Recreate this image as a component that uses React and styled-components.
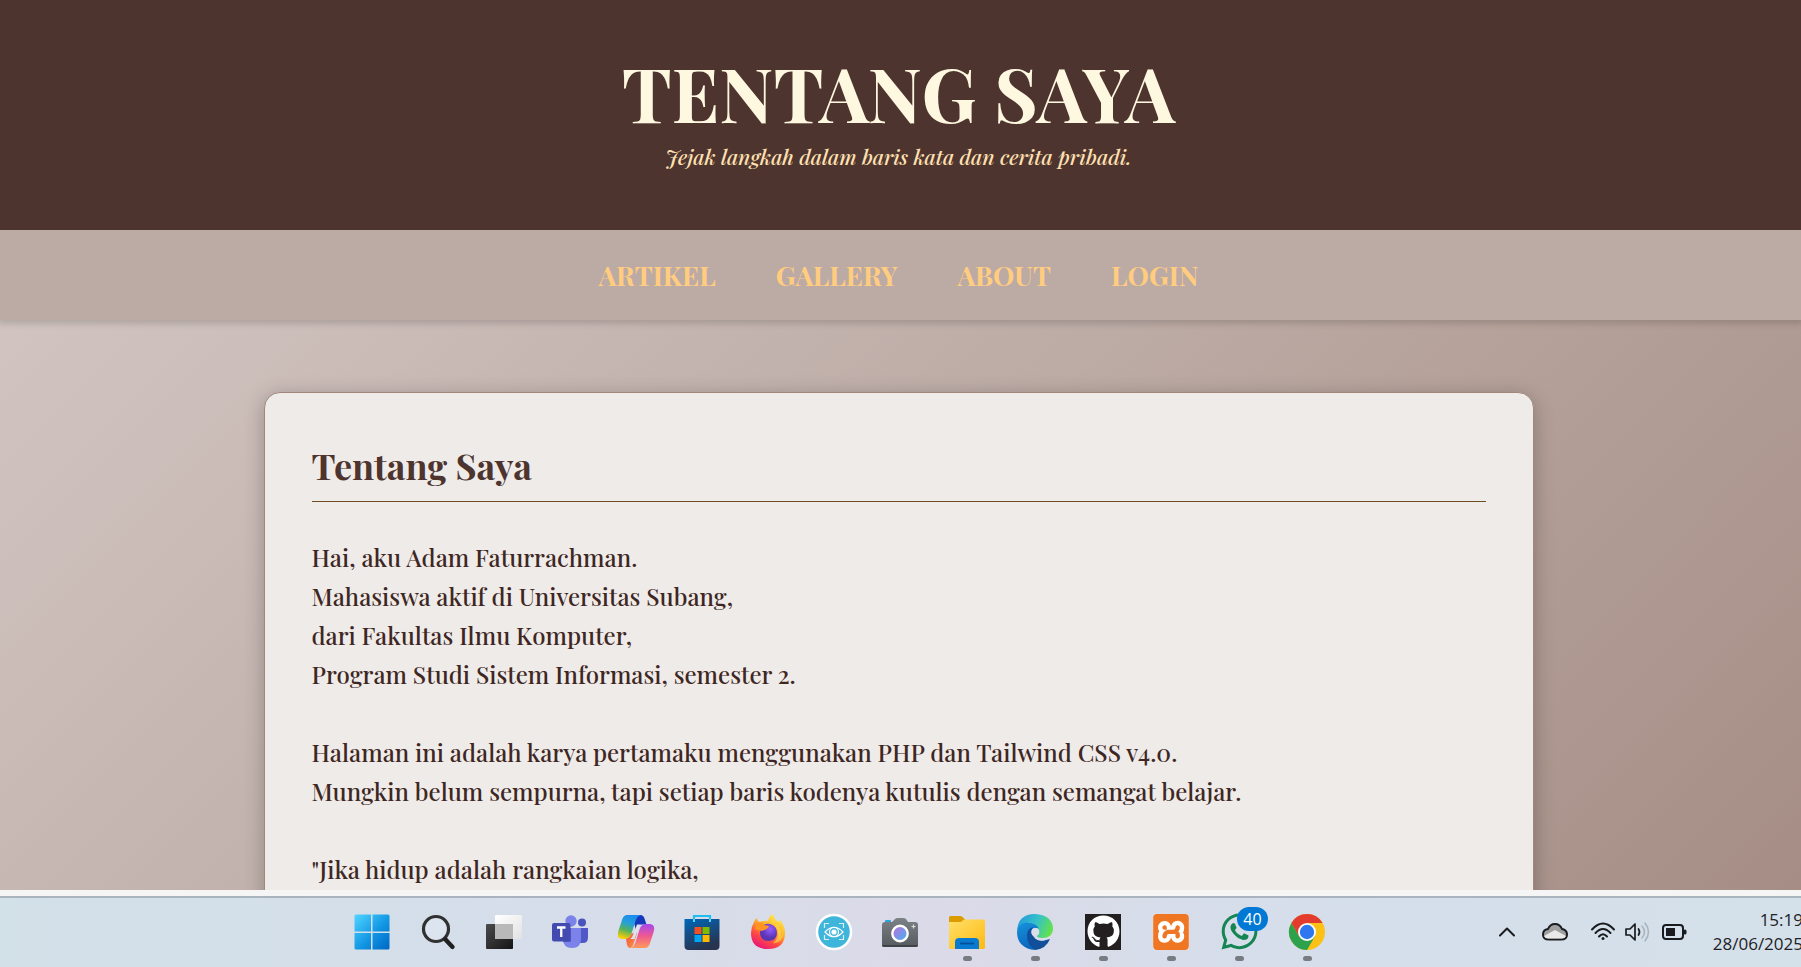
import React from "react";
import styled, { createGlobalStyle } from "styled-components";
import { FaGithub, FaWhatsapp } from "react-icons/fa";
import { SiXampp } from "react-icons/si";

const GlobalStyle = createGlobalStyle`
  * { box-sizing: border-box; }
  body { margin: 0; }
  h1, h2, p { margin: 0; }
`;

const Screen = styled.div`
  display: flex;
  flex-direction: column;
  height: 100vh;
  overflow: hidden;
`;

const Page = styled.div`
  flex: 1;
  min-height: 0;
  overflow: hidden;
  background: linear-gradient(135deg, #d7ccc8, #bcaaa4, #a1887f) 0 0 / 100% 128%;
  color: #3e2723;
  font-family: "Playfair Display", "Liberation Serif", serif;
`;

const Header = styled.header`
  height: 230px;
  padding: 42px 4px 0 0;
  background: #4e342e;
  text-align: center;
`;

const SiteTitle = styled.h1`
  color: #fff8e1;
  font-size: 75px;
  font-weight: 700;
  line-height: 100px;
`;

const Tagline = styled.p`
  color: #ffe0b2;
  font-size: 21px;
  font-style: italic;
  font-weight: 500;
  line-height: 28px;
`;

const Nav = styled.nav`
  display: flex;
  align-items: center;
  justify-content: center;
  gap: 60px;
  position: relative;
  height: 90px;
  padding-right: 4px;
  background: #bcaaa4;
  box-shadow: 0 2px 6px 2px rgba(0, 0, 0, 0.14);
  clip-path: inset(0 0 -12px 0);
`;

const NavLink = styled.a`
  color: #ffcc80;
  font-size: 27px;
  font-weight: 700;
  line-height: 36px;
  text-decoration: none;
`;

const Main = styled.main`
  padding: 72px 36px 72px 32px;
`;

const Card = styled.article`
  max-width: 1270px;
  margin: 0 auto;
  padding: 48px 47px;
  border: 1px solid #a1887f;
  border-radius: 16px;
  background: #efebe9;
  box-shadow: 0 4px 20px rgba(0, 0, 0, 0.25);
`;

const CardTitle = styled.h2`
  padding-bottom: 12px;
  border-bottom: 1px solid #6d4c1f;
  font-size: 36px;
  font-weight: 700;
  line-height: 48px;
  color: #4e342e;
`;

const Story = styled.div`
  display: flex;
  flex-direction: column;
  gap: 39px;
  margin-top: 36px;
`;

const Verse = styled.p`
  font-size: 24px;
  font-weight: 500;
  line-height: 39px;
  white-space: pre-line;
`;

const Taskbar = styled.footer`
  display: flex;
  justify-content: space-between;
  height: 77px;
  padding-left: 339px;
  border-top: 6px solid #f5f5f5;
  background: linear-gradient(90deg, #d2e0e8, #d5deea 28%, #dbdae8 52%, #d5deea 70%, #d4e0ea);
  box-shadow: inset 0 2px #aab4bf;
  color: #202225;
  font-family: "Segoe UI", "Open Sans", sans-serif;
  overflow: hidden;
`;

const Apps = styled.div`
  display: flex;
`;

const AppButton = styled.button`
  display: flex;
  align-items: center;
  justify-content: center;
  position: relative;
  width: ${(p) => (p.$running ? 68 : 66)}px;
  height: 71px;
  padding: 0;
  border: 0;
  background: transparent;

  &::after {
    content: "";
    display: ${(p) => (p.$running ? "block" : "none")};
    position: absolute;
    bottom: 6px;
    width: 9px;
    height: 5px;
    border-radius: 3px;
    background: #777b82;
  }
`;

const Art = styled.svg`
  display: block;
  width: 36px;
  height: 36px;
  overflow: visible;
`;

const Tile = styled.span`
  display: flex;
  align-items: center;
  justify-content: center;
  width: 36px;
  height: 36px;
  border-radius: ${(p) => p.$radius || 0}px;
  background: ${(p) => p.$bg};
  color: ${(p) => p.$fg};

  svg { flex: none; }
`;

const Badge = styled.span`
  position: absolute;
  top: 11px;
  left: 32px;
  width: 31px;
  height: 24px;
  border-radius: 12px;
  background: #0078d4;
  color: #fff;
  font: 16px/24px "Segoe UI", "Open Sans", sans-serif;
  text-align: center;
`;

const Tray = styled.div`
  display: flex;
  align-items: center;
  gap: 10px;
`;

const TrayButton = styled.button`
  display: flex;
  padding: 0;
  border: 0;
  margin-right: ${(p) => p.$after || 0}px;
  background: transparent;
  color: inherit;
`;

const TrayArt = styled.svg`
  display: block;
  width: 24px;
  height: 24px;
  overflow: visible;
  fill: none;
  stroke: #191b1e;
  stroke-width: 2;
  stroke-linecap: round;
  stroke-linejoin: round;
`;

const Clock = styled.time`
  margin: 0 -2px 0 16px;
  font-size: 17px;
  line-height: 24px;
  text-align: right;
  white-space: pre-line;
`;

const Stops = ({ id, from, to, mid, x2 = 1, y2 = 1 }) => (
  <linearGradient id={id} x1="0" y1="0" x2={x2} y2={y2}>
    <stop offset="0" stopColor={from} />
    {mid && <stop offset=".5" stopColor={mid} />}
    <stop offset="1" stopColor={to} />
  </linearGradient>
);

const WindowsIcon = () => (
  <Art viewBox="0 0 36 36">
    <defs>
      <linearGradient id="win" gradientUnits="userSpaceOnUse" x1="1" y1="1" x2="35" y2="35">
        <stop offset="0" stopColor="#4fd3ff" />
        <stop offset=".55" stopColor="#1297e4" />
        <stop offset="1" stopColor="#0067c4" />
      </linearGradient>
    </defs>
    <path fill="url(#win)" d="M2 .5h15v17H.5V2Q.5.5 2 .5zM18.500.5H34q1.500 0 1.500 1.500v15.500h-17zM.5 19H17v16.500H2Q.5 35.500.5 34zM18.500 19h17v15q0 1.500-1.500 1.500H18.500z" />
  </Art>
);

const SearchIcon = () => (
  <Art viewBox="0 0 36 36" fill="none" strokeLinecap="round">
    <circle cx="16" cy="15" r="12.500" fill="#dce5ef" stroke="#303030" strokeWidth="3.200" />
    <path d="M25.500 25.500l7 7.500" stroke="#202020" strokeWidth="4.400" />
  </Art>
);

const TaskViewIcon = () => (
  <Art viewBox="0 0 36 36">
    <defs>
      <Stops id="tvd" from="#4b4b4b" to="#151515" />
      <Stops id="tvw" from="#ffffff" to="#e2e2e2" />
    </defs>
    <rect x="0" y="10" width="27" height="25" rx="1" fill="url(#tvd)" />
    <rect x="9" y="1" width="27" height="24" rx="1" fill="url(#tvw)" />
    <path d="M9 10h18v15H9z" fill="#b9b9b9" />
  </Art>
);

const TeamsIcon = () => (
  <Art viewBox="0 0 36 36">
    <circle cx="30" cy="8.500" r="4" fill="#4b53bc" />
    <path d="M24 14h12v9.500q0 6-6 5.500h-5z" fill="#4f58c6" />
    <circle cx="19" cy="7" r="5.700" fill="#7b83eb" />
    <path d="M11 14h18v11q0 9-9 9t-9-9z" fill="#7b83eb" />
    <path d="M12 14h7v14h-8z" fill="#5660c4" />
    <rect x="0" y="9" width="18.500" height="18.500" rx="2" fill="#444bb0" />
    <path d="M5 13.500h8.500M9.250 13.500V23" stroke="#fff" strokeWidth="2.300" fill="none" />
  </Art>
);

const CopilotIcon = () => (
  <Art viewBox="0 0 36 36">
    <defs>
      <linearGradient id="cpa" x1=".6" y1="0" x2=".3" y2="1">
        <stop offset="0" stopColor="#1b8bf0" />
        <stop offset=".35" stopColor="#25a0d8" />
        <stop offset=".65" stopColor="#58b25a" />
        <stop offset="1" stopColor="#ffd000" />
      </linearGradient>
      <Stops id="cpb" from="#a546ee" mid="#ee5a91" to="#ff9a58" x2={0} />
      <Stops id="cpo" from="#f0503c" to="#ff9a4a" />
    </defs>
    <path d="M14 1h8.500q3 0 4 3.500l2 6H24q-4 0-6 6z" fill="#1737bd" />
    <path d="M9 1h14q-4 1-5.500 6l-4 12.500Q12 25 7 25H4q-6-.5-3.500-8.500L4.500 4.500Q6 1 9 1z" fill="url(#cpa)" />
    <path d="M8 24.800q4-.5 5.500-5.300L19 19l-3.500 11q-1.500 4-4 4-1.500 0-2.500-3z" fill="url(#cpo)" />
    <path d="M27 34H12q4-1 5.500-6l4-12.500Q23 10 28 10h4q6 .5 3.500 8.500l-4 12Q30 34 27 34z" fill="url(#cpb)" />
    <path d="M19 10.500h4q-2 1.500-3 4.500l-3.500 10h-4q2-2 3-5z" fill="#dfe3ee" />
  </Art>
);

const StoreIcon = () => (
  <Art viewBox="0 0 36 36">
    <defs><Stops id="store" from="#0067b8" to="#28334f" x2={0.4} /></defs>
    <path d="M10 8V2h16v6" fill="none" stroke="#20bdf2" strokeWidth="2.200" />
    <path d="M.5 5h35v27q0 4-4 4h-27q-4 0-4-4z" fill="url(#store)" />
    <path d="M10 5v3M26 5v3" stroke="#58d5fa" strokeWidth="2" />
    <path d="M10.500 13h7v7h-7z" fill="#f25022" />
    <path d="M18.500 13h7v7h-7z" fill="#7fba00" />
    <path d="M10.500 21h7v7h-7z" fill="#00a4ef" />
    <path d="M18.500 21h7v7h-7z" fill="#ffb900" />
  </Art>
);

const FirefoxIcon = () => (
  <Art viewBox="0 0 36 36">
    <defs>
      <linearGradient id="ffx" x1=".8" y1="0" x2=".25" y2="1">
        <stop offset="0" stopColor="#fff44f" />
        <stop offset=".4" stopColor="#ffb12b" />
        <stop offset=".7" stopColor="#ff4a43" />
        <stop offset="1" stopColor="#e5127d" />
      </linearGradient>
      <radialGradient id="ffp" cx=".6" cy=".3">
        <stop offset="0" stopColor="#9a5cff" />
        <stop offset="1" stopColor="#5a36b5" />
      </radialGradient>
    </defs>
    <path d="M4 8q1-3 3-4 0 3 3 4 4-2 8-1 1-5 5-7 1 5 5 8l2-2q5 6 5 13 0 16-17 16T1 19q0-6 3-11z" fill="url(#ffx)" />
    <path d="M11 15q2-6 9-5 7 2 7 9t-8 8q-9 0-9-9z" fill="url(#ffp)" />
    <path d="M5 15q1-6 5-7 4 1 4 3l5 1q-1 3-5 4l-2 1q-4-1-7-2z" fill="#ff9422" />
    <path d="M22 3q1 5 5 8 5 5 4 12 3-5 1-11 3 7-1 14-4 4-8 3 6-4 5-12-1-6-6-9z" fill="#ffe047" opacity=".6" />
  </Art>
);

const EyeIcon = () => (
  <Art viewBox="0 0 36 36" fill="none" stroke="#fff" strokeWidth="1.200">
    <circle cx="18" cy="18" r="17" fill="#40b5db" strokeWidth="2.500" />
    <path d="M8.500 14V9.500H13M23 9.500h4.500V14M8.500 21v4.500H13M23 25.500h4.500V21" stroke="#d6f1fb" />
    <path d="M9 18q9-9.500 18 0-9 9.500-18 0z" />
    <circle cx="18" cy="18" r="4.500" />
    <circle cx="18" cy="18" r="2" fill="#fff" />
  </Art>
);

const CameraIcon = () => (
  <Art viewBox="0 0 36 36">
    <defs>
      <Stops id="cam" from="#7d8286" to="#555a5e" x2={0} />
      <Stops id="lens" from="#c36bd9" to="#3db6f5" />
    </defs>
    <rect x="3" y="6" width="6" height="4" rx="1" fill="#24a7df" />
    <path d="M0 11q0-3 3-3h7l3-3q1-1 3-1h5q2 0 3 1l2 3h7q3 0 3 3v20q0 2-2 2H2q-2 0-2-2z" fill="url(#cam)" />
    <path d="M0 31h36q0 2-2 2H2q-2 0-2-2z" fill="#3f4246" />
    <circle cx="18" cy="19.500" r="7.700" fill="url(#lens)" stroke="#fff" strokeWidth="2.400" />
    <path d="M31.500 10.500v4M29.500 12.500h4" stroke="#d9dde0" strokeWidth="1.200" />
  </Art>
);

const FolderIcon = () => (
  <Art viewBox="0 0 36 36">
    <defs><Stops id="fold" from="#ffe06a" to="#ffb90f" /></defs>
    <path d="M0 3.500Q0 2 1.500 2H11q1.500 0 2.500 1l3 3v6H0z" fill="#dc9c00" />
    <path d="M0 8h12l3-2.500h19.500Q36 5.500 36 7v26.500q0 1.500-1.500 1.500h-33Q0 35 0 33.500z" fill="url(#fold)" />
    <path d="M6 35v-7q0-4 4-4h16q4 0 4 4v7z" fill="#087bd0" />
    <path d="M11 29.500h14" stroke="#064f98" strokeWidth="1.800" />
  </Art>
);

const EdgeIcon = () => (
  <Art viewBox="0 0 36 36">
    <defs>
      <linearGradient id="edt" x1="0" y1=".3" x2="1" y2=".6">
        <stop offset="0" stopColor="#229bdc" />
        <stop offset=".5" stopColor="#35c1c9" />
        <stop offset="1" stopColor="#65e348" />
      </linearGradient>
      <Stops id="edb" from="#1693dc" to="#0b66bd" x2={0.3} />
    </defs>
    <path d="M0 17Q1 0 18 0q17 1 18 14 0 10-11 10-5 0-6-3 4-3 1-8Q11 3 0 17z" fill="url(#edt)" />
    <path d="M0 18Q1 9 10 8.500q9 0 12 6-8-2-8 6 0 9 9 13-4 3-9 2Q0 32 0 18z" fill="url(#edb)" />
    <path d="M10 21q0-6 6-8-3 5 0 9 6 7 17 3-4 10-15 11-8-5-8-15z" fill="#114f9b" />
    <circle cx="18.300" cy="18" r="4" fill="#d9deea" />
    <path d="M17 21q4 6 13 4.500-7 3-12-1z" fill="#d9deea" />
  </Art>
);

const ChromeIcon = () => (
  <Art viewBox="0 0 36 36">
    <circle cx="18" cy="18" r="18" fill="#fbc116" />
    <path d="M2.400 9A18 18 0 0133.600 9H18l-7.800 13.500z" fill="#e33b2e" />
    <path d="M2.400 9A18 18 0 0018 36l7.800-13.500H10.200z" fill="#2da14b" />
    <circle cx="18" cy="18" r="9" fill="#fff" />
    <circle cx="18" cy="18" r="7.200" fill="#2f77ee" />
  </Art>
);

const GithubIcon = () => (
  <Tile $bg="#231f20" $fg="#fff"><FaGithub size={33} /></Tile>
);

const XamppIcon = () => (
  <Tile $bg="#fff" $fg="#ef7622" $radius={4}><SiXampp size={36} /></Tile>
);

const WhatsappIcon = () => (
  <Tile $bg="transparent" $fg="#168554"><FaWhatsapp size={41} /></Tile>
);

const apps = [
  { name: "Start", icon: WindowsIcon },
  { name: "Search", icon: SearchIcon },
  { name: "Task View", icon: TaskViewIcon },
  { name: "Teams", icon: TeamsIcon },
  { name: "Copilot", icon: CopilotIcon },
  { name: "Store", icon: StoreIcon },
  { name: "Firefox", icon: FirefoxIcon },
  { name: "Eye Viewer", icon: EyeIcon },
  { name: "Camera", icon: CameraIcon },
  { name: "File Explorer", icon: FolderIcon, running: true },
  { name: "Edge", icon: EdgeIcon, running: true },
  { name: "GitHub", icon: GithubIcon, running: true },
  { name: "XAMPP", icon: XamppIcon, running: true },
  { name: "WhatsApp", icon: WhatsappIcon, running: true, badge: 40 },
  { name: "Chrome", icon: ChromeIcon, running: true },
];

const links = ["ARTIKEL", "GALLERY", "ABOUT", "LOGIN"];

const verses = [
  "Hai, aku Adam Faturrachman.\nMahasiswa aktif di Universitas Subang,\ndari Fakultas Ilmu Komputer,\nProgram Studi Sistem Informasi, semester 2.",
  "Halaman ini adalah karya pertamaku menggunakan PHP dan Tailwind CSS v4.0.\nMungkin belum sempurna, tapi setiap baris kodenya kutulis dengan semangat belajar.",
  "\"Jika hidup adalah rangkaian logika,",
];

export default function App() {
  return (
    <Screen>
      <GlobalStyle />
      <Page>
        <Header>
          <SiteTitle>TENTANG SAYA</SiteTitle>
          <Tagline>Jejak langkah dalam baris kata dan cerita pribadi.</Tagline>
        </Header>
        <Nav>
          {links.map((label) => (
            <NavLink key={label} href={`#${label.toLowerCase()}`}>{label}</NavLink>
          ))}
        </Nav>
        <Main>
          <Card>
            <CardTitle>Tentang Saya</CardTitle>
            <Story>
              {verses.map((text) => <Verse key={text}>{text}</Verse>)}
            </Story>
          </Card>
        </Main>
      </Page>
      <Taskbar>
        <Apps>
          {apps.map(({ name, icon: Icon, running, badge }) => (
            <AppButton key={name} aria-label={name} $running={running}>
              <Icon />
              {badge && <Badge>{badge}</Badge>}
            </AppButton>
          ))}
        </Apps>
        <Tray>
          <TrayButton aria-label="Hidden icons" $after={14}>
            <TrayArt viewBox="0 0 24 24"><path d="M5 15.500l7-7 7 7" /></TrayArt>
          </TrayButton>
          <TrayButton aria-label="OneDrive" $after={14}>
            <TrayArt viewBox="0 0 24 24">
              <path d="M6 19.500q-6 0-6-5 0-5 5-5.500 2-5 7-5 5 0 7 5 5 1 5 5.500 0 5-6 5z" fill="#a0a0a0" />
              <path d="M1 16l11-6 11 6q-1 2.500-4 2.500H5q-3 0-4-2.500z" fill="#e9e9e9" stroke="none" />
            </TrayArt>
          </TrayButton>
          <TrayButton aria-label="Wi-Fi">
            <TrayArt viewBox="0 0 24 24">
              <path d="M1 9.500q11-12 22 0M4.500 13q7.500-8 15 0M8 16.500q4-4.500 8 0" />
              <circle cx="12" cy="18.500" r="1.500" fill="#191b1e" stroke="none" />
            </TrayArt>
          </TrayButton>
          <TrayButton aria-label="Volume" $after={4}>
            <TrayArt viewBox="0 0 24 24">
              <path d="M1 9h4l5-5v16l-5-5H1zM13.500 9q2 3 0 6" strokeWidth="1.700" />
              <path d="M17 6q5 6 0 12M20 3q7 9 0 18" stroke="#a9b3bd" strokeWidth="1.500" />
            </TrayArt>
          </TrayButton>
          <TrayButton aria-label="Battery">
            <TrayArt viewBox="0 0 24 24">
              <rect x="0" y="5" width="20" height="14" rx="3" />
              <path d="M3 8h9v8H3z" fill="#191b1e" stroke="none" />
              <path d="M22 11v2" strokeWidth="3" />
            </TrayArt>
          </TrayButton>
          <Clock>{"15:19\n28/06/2025"}</Clock>
        </Tray>
      </Taskbar>
    </Screen>
  );
}
